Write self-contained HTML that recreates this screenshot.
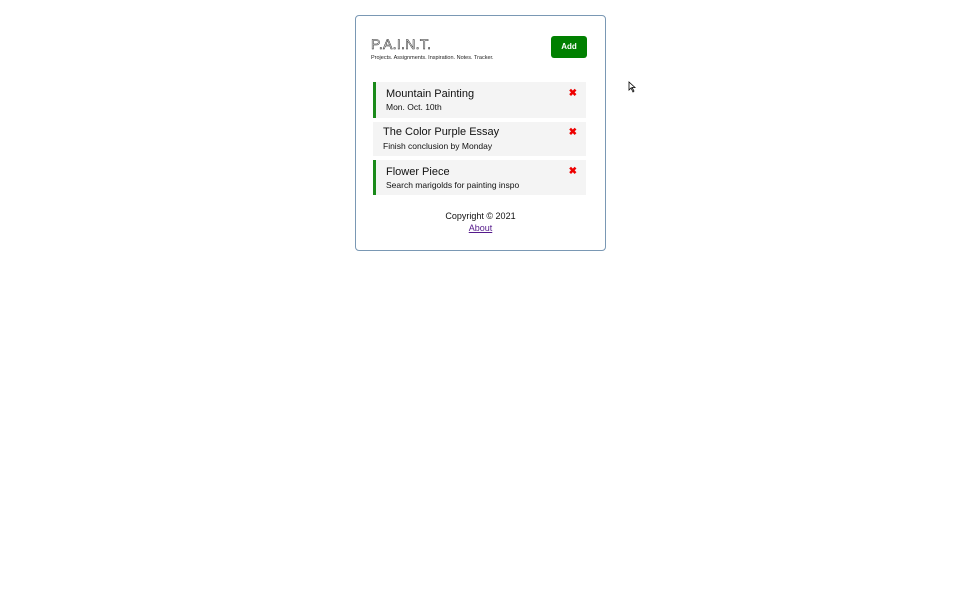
<!DOCTYPE html>
<html><head><meta charset="utf-8"><style>
*{margin:0;padding:0;box-sizing:border-box}
body{width:960px;height:600px;background:#fff;font-family:"Liberation Sans",sans-serif;color:#111;position:relative;overflow:hidden}
.c{position:absolute;left:355px;top:15px;width:251px;height:236px;border:1px solid #7a98b4;border-radius:4px}
.logo{position:absolute;left:15px;top:20px;font-family:"Liberation Sans",sans-serif;font-size:14px;letter-spacing:0.3px;color:#fff;-webkit-text-stroke:0.5px #222}
.tag{position:absolute;left:15px;top:39px;font-size:5.5px;color:#222}
.add{position:absolute;left:195px;top:20px;width:36px;height:22px;background:#008000;border-radius:3px;color:#fff;font-size:8px;font-weight:bold;text-align:center;line-height:22px}
.t{position:absolute;left:17px;width:213px;background:#f4f4f4}
.t.r{border-left:3px solid #1a8a1a}
.t h3{position:absolute;left:10px;top:6px;font-size:11px;font-weight:normal;color:#111}
.t p{position:absolute;left:10px;top:20px;font-size:8.5px;color:#111}
.t .x{position:absolute;right:9px;top:6px;color:#e00;font-size:10px;font-weight:bold}
.f{position:absolute;left:0;width:100%;text-align:center;font-size:9px}
</style></head><body>
<div class="c">
<div class="logo">P.A.I.N.T.</div>
<div class="tag">Projects. Assignments. Inspiration. Notes. Tracker.</div>
<div class="add">Add</div>
<div class="t r" style="top:66px;height:36px"><h3>Mountain Painting</h3><p>Mon. Oct. 10th</p><span class="x">✖</span></div>
<div class="t" style="top:106px;height:34px"><h3 style="left:10px;top:4px">The Color Purple Essay</h3><p style="left:10px;top:19px">Finish conclusion by Monday</p><span class="x" style="top:5px">✖</span></div>
<div class="t r" style="top:144px;height:35px"><h3>Flower Piece</h3><p>Search marigolds for painting inspo</p><span class="x">✖</span></div>
<div class="f" style="top:195px">Copyright © 2021</div>
<div class="f" style="top:207px;color:#551a8b;text-decoration:underline">About</div>
</div>
<svg style="position:absolute;left:628px;top:81px" width="8" height="12"><path d="M1 1 L1 9 L3 7 L5 11 L6 10 L4 6.5 L7 6.5 Z" fill="#fff" stroke="#000" stroke-width="0.8"/></svg>
</body></html>
